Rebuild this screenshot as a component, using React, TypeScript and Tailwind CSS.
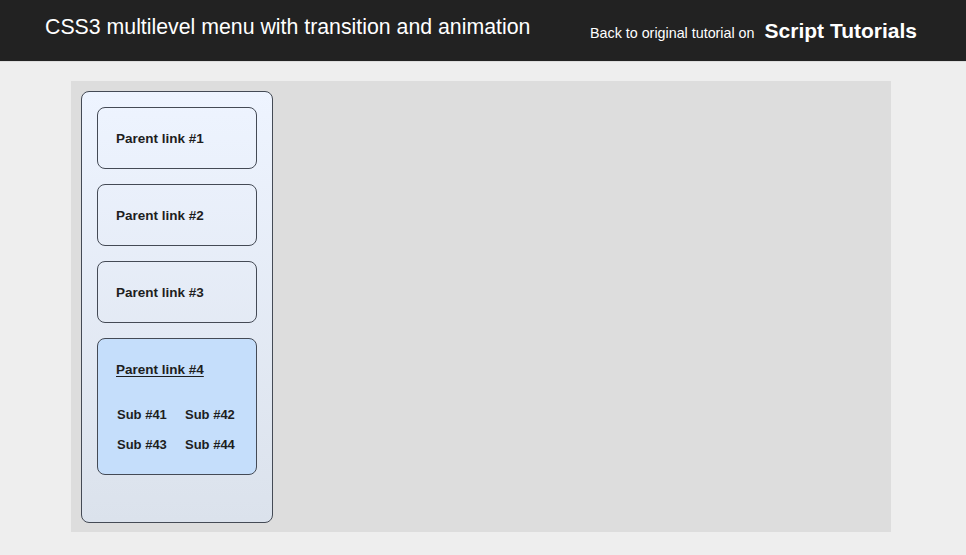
const PARENTS = ['Parent link #1', 'Parent link #2', 'Parent link #3']
const SUBS = ['Sub #41', 'Sub #42', 'Sub #43', 'Sub #44']

export default function App() {
  return (
    <div className="min-h-[555px] bg-[#eeeeee] font-['Liberation_Sans',Arial,sans-serif]">
      <header className="h-[62px] bg-[#222222] border-b border-[#dddddd] flex items-start justify-between pl-[45px] pr-[49px]">
        <h1 className="mt-[14px] text-[21.3px] leading-[26px] text-white">
          CSS3 multilevel menu with transition and animation
        </h1>
        <div className="mt-[15px] flex items-baseline gap-[10px] text-white">
          <span className="text-[14.3px]">Back to original tutorial on</span>
          <span className="text-[21px] font-bold">Script Tutorials</span>
        </div>
      </header>

      <main className="mx-[71px] mt-[19px] h-[451px] w-[820px] bg-[#dddddd] p-[10px]">
        <nav className="h-[432px] w-[192px] rounded-[8px] border border-[#444a55] bg-gradient-to-b from-[#eef4ff] to-[#dbe2ec] p-[15px] flex flex-col gap-[15px]">
          {PARENTS.map((label) => (
            <a
              key={label}
              href="#"
              className="h-[62px] rounded-[8px] border border-[#444a55] flex items-center pl-[18px] pt-[2px] text-[13.5px] font-bold text-[#1e1e1e]"
            >
              {label}
            </a>
          ))}
          <div className="h-[137px] rounded-[8px] border border-[#444a55] bg-[#c5defb] pl-[18px] pt-[21px] text-[13px] font-bold text-[#1e1e1e]">
            <a href="#" className="text-[13.5px] underline underline-offset-2">Parent link #4</a>
            <div className="mt-[27px] grid grid-cols-[68px_68px] gap-y-[14px] pl-[1px]">
              {SUBS.map((s) => (
                <a key={s} href="#" className="leading-[16px]">{s}</a>
              ))}
            </div>
          </div>
        </nav>
      </main>
    </div>
  )
}
